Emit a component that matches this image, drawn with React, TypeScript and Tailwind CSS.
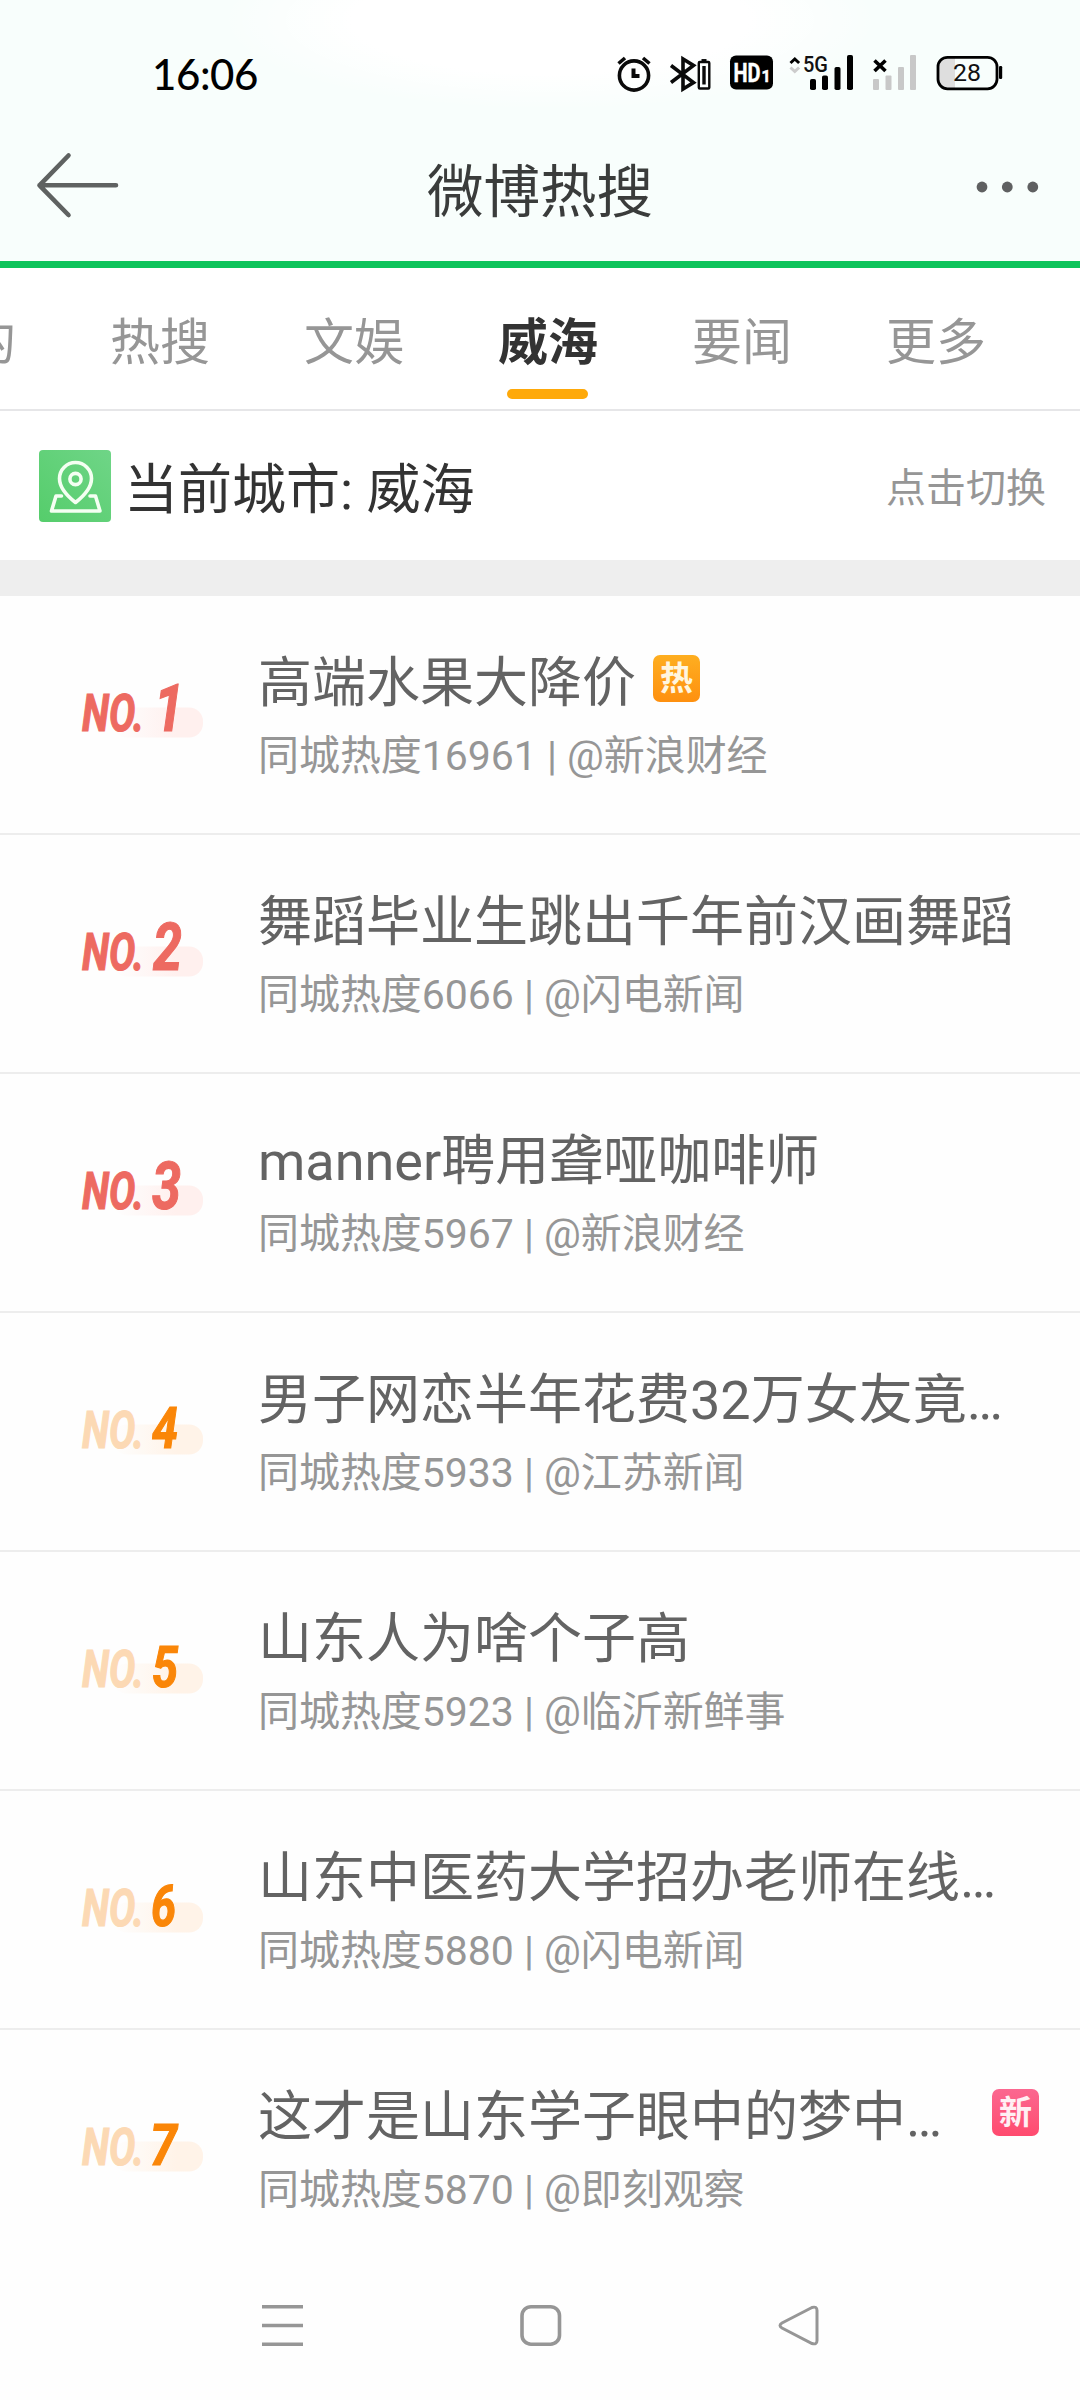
import React from "react";

const SANS = "font-['Roboto','Noto_Sans_CJK_SC',sans-serif]";

type Badge = { label: string; tone: "hot" | "new" };
type Item = {
  rank: number;
  title: string;
  heat: number;
  source: string;
  badge?: Badge;
};

const ITEMS: Item[] = [
  { rank: 1, title: "高端水果大降价", heat: 16961, source: "新浪财经", badge: { label: "热", tone: "hot" } },
  { rank: 2, title: "舞蹈毕业生跳出千年前汉画舞蹈", heat: 6066, source: "闪电新闻" },
  { rank: 3, title: "manner聘用聋哑咖啡师", heat: 5967, source: "新浪财经" },
  { rank: 4, title: "男子网恋半年花费32万女友竟…", heat: 5933, source: "江苏新闻" },
  { rank: 5, title: "山东人为啥个子高", heat: 5923, source: "临沂新鲜事" },
  { rank: 6, title: "山东中医药大学招办老师在线…", heat: 5880, source: "闪电新闻" },
  { rank: 7, title: "这才是山东学子眼中的梦中…", heat: 5870, source: "即刻观察", badge: { label: "新", tone: "new" } },
];

// Horizontal start and width of each rank digit.
const DIGIT: Record<number, [number, number]> = {
  1: [76, 30],
  2: [75, 29],
  3: [74, 29],
  4: [74, 26],
  5: [74, 26],
  6: [73, 25],
  7: [72, 27],
};

function StatusBar() {
  return (
    <div className="flex h-[120px] items-start justify-between bg-[radial-gradient(ellipse_330px_90px_at_550px_20px,#fff_60%,transparent)] pl-[152px] pr-[76px]">
      <span className="mt-[48px] font-['Lato',sans-serif] text-[42px] font-medium leading-[52px] tracking-[-0.4px] text-black">16:06</span>
      <svg className="mt-[48px]" width="388" height="50" viewBox="616 48 388 50" fill="none">
        {/* alarm */}
        <g stroke="#0a0a0a" strokeWidth="3.6">
          <circle cx="634" cy="75.500" r="14.600" />
          <path d="M618.500 63.500l6.500-5.500M649.500 63.500l-6.500-5.500" />
          <path d="M633.500 68.500v7.500h6" strokeWidth="4" />
        </g>
        {/* bluetooth with device battery */}
        <path d="M671 65.500l22.500 17-10.500 6.500V59l10.500 6.500L671 82.500" stroke="#0a0a0a" strokeWidth="3.600" />
        <rect x="698.800" y="62" width="10.500" height="26.500" rx="1" stroke="#0a0a0a" strokeWidth="2.400" />
        <path d="M701.500 60.300h5" stroke="#0a0a0a" strokeWidth="2.500" />
        <path d="M704 66v18.500" stroke="#0a0a0a" strokeWidth="3.400" />
        {/* HD voice */}
        <rect x="730" y="55.500" width="43" height="34" rx="6" fill="#000" />
        <text x="733.500" y="81.500" fontFamily="Roboto" fontWeight="700" fontSize="26" fill="#fff" stroke="#fff" strokeWidth="0.500" textLength="27" lengthAdjust="spacingAndGlyphs">HD</text>
        <text x="761.500" y="81.500" fontFamily="Roboto" fontWeight="700" fontSize="16" fill="#fff" stroke="#fff" strokeWidth="0.500">1</text>
        {/* 5G signal */}
        <path d="M790.500 63l4.300-4 4.300 4" stroke="#000" strokeWidth="3" />
        <path d="M790.500 67.500l4.300 4 4.300-4" stroke="#ccc" strokeWidth="3" />
        <text x="803" y="72" fontFamily="Roboto" fontWeight="500" fontSize="22.500" fill="#111" textLength="25" lengthAdjust="spacingAndGlyphs">5G</text>
        <g fill="#000">
          <rect x="810" y="79" width="6" height="11" rx="1.800" />
          <rect x="822" y="75.500" width="6" height="14.500" rx="1.800" />
          <rect x="834.500" y="67" width="6" height="23" rx="1.800" />
          <rect x="847" y="55" width="6" height="35" rx="1.800" />
        </g>
        <path d="M874.500 60.500l11 10.500M885.500 60.500l-11 10.500" stroke="#000" strokeWidth="3.600" />
        <g fill="#c8c8c8">
          <rect x="873" y="79" width="6" height="11" rx="1" />
          <rect x="885.500" y="75.500" width="6" height="14.500" rx="1" />
          <rect x="898" y="67" width="6" height="23" rx="1" />
          <rect x="910" y="55" width="6" height="35" rx="1" />
        </g>
        {/* battery */}
        <path d="M955 58h-7a9 9 0 0 0-9 9v12a9 9 0 0 0 9 9h7z" fill="#dedede" />
        <rect x="938" y="57.300" width="59" height="31.500" rx="9.500" stroke="#000" strokeWidth="2.800" />
        <rect x="999" y="66" width="3.200" height="13" rx="1.200" fill="#000" />
        <text x="953" y="81" fontFamily="Roboto" fontSize="23.500" fill="#111" textLength="28" lengthAdjust="spacingAndGlyphs">28</text>
      </svg>
    </div>
  );
}

function TitleBar() {
  return (
    <div className="flex h-[141px] items-start justify-between px-[36px]">
      <svg className="mt-[30px]" width="84" height="70" viewBox="36 150 84 70" fill="none" stroke="#5f6261" strokeWidth="4.600" strokeLinecap="round" strokeLinejoin="round">
        <path d="M116 185.300H39.500M68.500 155.500L39.500 185.300L68.500 215" />
      </svg>
      <h1 className="mt-[33px] text-[56.500px] font-normal leading-[80px] text-[#3a3c3b]">微博热搜</h1>
      <svg className="mt-[57px]" width="84" height="20" viewBox="960 177 84 20" fill="#5f6061">
        <circle cx="982" cy="187" r="5.400" />
        <circle cx="1007.300" cy="187" r="5.400" />
        <circle cx="1032.800" cy="187" r="5.400" />
      </svg>
    </div>
  );
}

const TABS = ["我的", "热搜", "文娱", "威海", "要闻", "更多"];

function Tabs() {
  return (
    <nav className="flex h-[143px] overflow-hidden border-b-2 border-[#e6e6e8] bg-white">
      <div className="-ml-[131px] flex">
        {TABS.map((tab) => {
          const active = tab === "威海";
          return (
            <div key={tab} className="flex w-[194px] shrink-0 flex-col items-center">
              <span
                className={
                  active
                    ? "mt-[39px] text-[50px] font-bold leading-[72px] text-[#333]"
                    : "mt-[39px] text-[50px] leading-[72px] text-[#969696]"
                }
              >
                {tab}
              </span>
              {active && <span className="mr-[2px] mt-[10px] h-[10px] w-[81px] rounded-full bg-[#fea90a]" />}
            </div>
          );
        })}
      </div>
    </nav>
  );
}

function CityBar() {
  return (
    <div className="flex h-[149px] items-center bg-white pl-[39px] pr-[34px]">
      <svg className="shrink-0" width="72" height="72" viewBox="0 0 72 72" fill="none">
        <defs>
          <linearGradient id="city" x1="1" y1="0" x2="0" y2="1">
            <stop offset="0" stopColor="#6fd587" />
            <stop offset="1" stopColor="#55cd6b" />
          </linearGradient>
        </defs>
        <rect width="72" height="72" rx="4" fill="url(#city)" />
        <g stroke="#f4fff2" strokeWidth="3.600" strokeLinejoin="round" strokeLinecap="round">
          <path d="M36.500 52.500C32 49 20.500 39 20.500 28.500a16 16 0 0 1 32 0C52.500 39 41 49 36.500 52.500z" />
          <circle cx="36.500" cy="29" r="5.600" />
          <path d="M22.500 46h-5.500l-4.500 15h48.500l-4.500-15H51" />
        </g>
      </svg>
      <span className="ml-[13px] mt-[10px] text-[54px] leading-[80px] text-[#333]">当前城市: 威海</span>
      <span className="ml-auto mt-[6px] text-[40px] leading-[60px] text-[#969696]">点击切换</span>
    </div>
  );
}

function Rank({ rank }: { rank: number }) {
  const top = rank <= 3;
  const [x, width] = DIGIT[rank];
  const digitColor = top ? "#ed6a61" : "#fa8608";
  const labelColor = top ? "#ed6a61" : "#fcd9b4";
  return (
    <svg className="absolute left-[78px] top-[60px]" width="130" height="100" viewBox="0 -20 130 100">
      <defs>
        <linearGradient id={`pill${rank}`} x1="0" x2="1">
          <stop offset="0" stopColor={top ? "#fff0ee" : "#fff3e8"} stopOpacity="0" />
          <stop offset="0.700" stopColor={top ? "#fff0ee" : "#fff3e8"} />
        </linearGradient>
      </defs>
      <rect x="35" y="31.500" width="90" height="30" rx="14" fill={`url(#pill${rank})`} />
      <g fontFamily="Roboto" fontStyle="italic" fontWeight="700">
        <text x="4" y="55" fontSize="52" fill={labelColor} stroke={labelColor} strokeWidth="1.200" textLength="62" lengthAdjust="spacingAndGlyphs">NO.</text>
        <text x={x} y="55" fontSize={top ? 66 : 57} fill={digitColor} stroke={digitColor} strokeWidth="1.200" textLength={width} lengthAdjust="spacingAndGlyphs">{rank}</text>
      </g>
    </svg>
  );
}

function Row({ item, last }: { item: Item; last: boolean }) {
  const { badge } = item;
  return (
    <li className={last ? "relative h-[239px] pl-[258px] pr-[41px]" : "relative h-[239px] border-b-2 border-[#ededed] pl-[258px] pr-[41px]"}>
      <Rank rank={item.rank} />
      <div className="flex items-start pt-[49px]">
        <span className="whitespace-nowrap text-[54px] leading-[78px] text-[#636363]">{item.title}</span>
        {badge && (
          <span
            className={
              badge.tone === "hot"
                ? "ml-[17px] mt-[10px] flex h-[47px] w-[47px] items-center justify-center rounded-[7px] bg-linear-to-b from-[#feae20] to-[#fe900f] text-[33px] font-bold leading-none text-[#fff6e0]"
                : "ml-auto mt-[10px] flex h-[47px] w-[47px] items-center justify-center rounded-[7px] bg-linear-to-b from-[#fb6790] to-[#ff4a6e] text-[33px] font-bold leading-none text-[#fff0f4]"
            }
          >
            {badge.label}
          </span>
        )}
      </div>
      <p className="mt-[3px] whitespace-nowrap text-[41px] leading-[60px] tracking-[-0.05px] text-[#969696]">
        同城热度{item.heat} | @{item.source}
      </p>
    </li>
  );
}

function NavBar() {
  return (
    <div className="flex h-[131px] justify-center">
      <svg className="mt-[31px]" width="560" height="52" viewBox="260 2300 560 52" fill="none" stroke="#969696" strokeWidth="3.600">
        <path d="M262 2306.700h41M262 2325.500h41M262 2344.300h41" />
        <rect x="522" y="2306.700" width="37.500" height="37.500" rx="9" />
        <path d="M812 2307.500L782 2323q-4 2.500 0 5l30 15.500q5 1.500 5-3v-30q0-4.500-5-3z" strokeWidth="3" />
      </svg>
    </div>
  );
}

export default function App() {
  return (
    <div className={`${SANS} h-[2400px] w-[1080px] overflow-hidden bg-[#fefefe]`} lang="zh-CN">
      <header className="h-[268px] border-b-[7px] border-[#0dc45b] bg-[#f8fefc]">
        <StatusBar />
        <TitleBar />
      </header>
      <Tabs />
      <CityBar />
      <div className="h-[36px] bg-[#eee]" />
      <ul>
        {ITEMS.map((item, i) => (
          <Row key={item.rank} item={item} last={i === ITEMS.length - 1} />
        ))}
      </ul>
      <NavBar />
    </div>
  );
}
